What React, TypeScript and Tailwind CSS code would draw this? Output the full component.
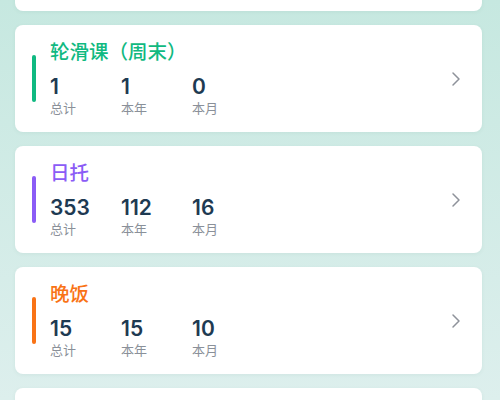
import { ChevronRight } from 'lucide-react'

type Item = {
  title: string
  color: string
  bar: string
  total: number
  year: number
  month: number
}

const items: Item[] = [
  { title: '轮滑课（周末）', color: 'text-[#10b981]', bar: 'bg-[#10b981]', total: 1, year: 1, month: 0 },
  { title: '日托', color: 'text-[#8b5cf6]', bar: 'bg-[#8b5cf6]', total: 353, year: 112, month: 16 },
  { title: '晚饭', color: 'text-[#f97316]', bar: 'bg-[#f97316]', total: 15, year: 15, month: 10 },
]

function Stat({ value, label }: { value: number; label: string }) {
  return (
    <div className="w-[71px] flex flex-col">
      <span className="text-[21px] leading-[26px] font-semibold text-[#1e3a52]">{value}</span>
      <span className="text-[13px] leading-[17px] text-[#8a9099]">{label}</span>
    </div>
  )
}

function Card({ item }: { item: Item }) {
  return (
    <div className="h-[107px] shrink-0 bg-white rounded-[8px] shadow-[0_1px_4px_rgba(0,80,70,0.06)] flex items-center pl-[17px] pr-[14px]">
      <div className={`w-[4px] h-[47px] rounded-full ${item.bar}`} />
      <div className="ml-[14px] flex-1 flex flex-col">
        <div className={`text-[19.5px] leading-[24px] font-medium ${item.color}`}>{item.title}</div>
        <div className="mt-[10px] flex">
          <Stat value={item.total} label="总计" />
          <Stat value={item.year} label="本年" />
          <Stat value={item.month} label="本月" />
        </div>
      </div>
      <ChevronRight size={24} strokeWidth={1.5} className="text-[#8e929a]" />
    </div>
  )
}

export default function App() {
  return (
    <div
      className="h-[400px] w-[500px] overflow-hidden bg-gradient-to-b from-[#c6e8e0] to-[#ddefed]"
      style={{ fontFamily: 'Inter, "Noto Sans CJK SC", sans-serif' }}
    >
      <div className="-mt-[96px] pl-[15px] pr-[18px] flex flex-col gap-[14px]">
        {/* card scrolled above the fold */}
        <div className="h-[107px] shrink-0 bg-white rounded-[8px] shadow-[0_1px_4px_rgba(0,80,70,0.06)]" />
        {items.map((item) => (
          <Card key={item.title} item={item} />
        ))}
        <div className="h-[107px] shrink-0 bg-white rounded-[8px] shadow-[0_1px_4px_rgba(0,80,70,0.06)]" />
      </div>
    </div>
  )
}
